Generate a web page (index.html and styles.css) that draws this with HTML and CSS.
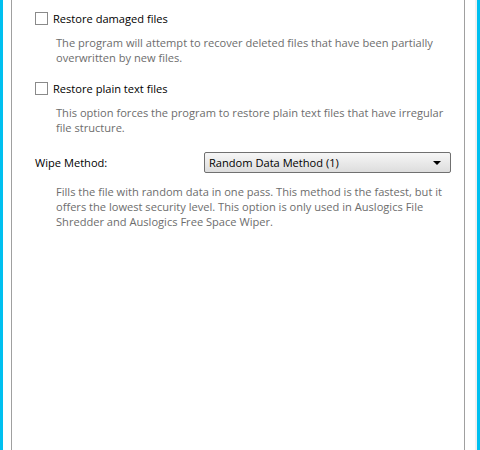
FILE: index.html
```html
<!DOCTYPE html>
<html lang="en">
<head>
    <meta charset="UTF-8">
    <title>Wipe Options</title>
    <link rel="stylesheet" href="styles.css">
</head>
<body>
    <div class="frame">
        <div class="panel">
            <div class="option">
                <label class="check-row"><span class="box"></span>Restore damaged files</label>
                <p class="desc">The program will attempt to recover deleted files that have been partially overwritten by new files.</p>
            </div>

            <div class="option">
                <label class="check-row"><span class="box"></span>Restore plain text files</label>
                <p class="desc">This option forces the program to restore plain text files that have irregular file structure.</p>
            </div>

            <div class="wipe-row">
                <span class="wipe-label">Wipe Method:</span>
                <div class="select">
                    <span>Random Data Method (1)</span>
                    <span class="arrow"></span>
                </div>
            </div>
            <p class="desc method-desc">Fills the file with random data in one pass. This method is the fastest, but it offers the lowest security level. This option is only used in Auslogics File Shredder and Auslogics Free Space Wiper.</p>
        </div>
        <div class="gutter"></div>
    </div>
</body>
</html>
```

FILE: styles.css
```css
body {
    margin: 0;
    font-family: "Open Sans", "Noto Sans", sans-serif;
    font-size: 11.1px;
    color: #000;
    background-color: #fff;
}

.frame {
    display: flex;
    height: 450px;
    border-left: 3px solid #00c0f0;
    border-right: 3px solid #00c0f0;
    padding-left: 8px;
}

.panel {
    flex: 1;
    border-left: 1px solid #a0a0a0;
    border-right: 1px solid #a0a0a0;
    padding: 5px 0 0 23px;
}

.gutter {
    width: 10px;
    border-right: 2px solid #f0f0f0;
}

.option {
    margin-bottom: 10px;
}

.check-row {
    display: flex;
    align-items: center;
    height: 26px;
}

.box {
    width: 11px;
    height: 11px;
    border: 1px solid #8a8a8a;
    background-color: #fff;
    margin-right: 5px;
}

.desc {
    margin: 4px 0 0 21px;
    color: #6d6d6d;
    line-height: 15px;
    padding-right: 20px;
}

.method-desc {
    margin-top: 11px;
}

.wipe-row {
    display: flex;
    align-items: center;
    margin-top: 17px;
}

.wipe-label {
    width: 169px;
}

.select {
    display: flex;
    align-items: center;
    justify-content: space-between;
    width: 232px;
    height: 19px;
    padding: 0 9px 0 4px;
    border: 1px solid #707070;
    border-radius: 2px;
    background: linear-gradient(#f6f6f6, #dddddd);
}

.arrow {
    width: 0;
    height: 0;
    border-left: 4px solid transparent;
    border-right: 4px solid transparent;
    border-top: 4px solid #000;
}
```
